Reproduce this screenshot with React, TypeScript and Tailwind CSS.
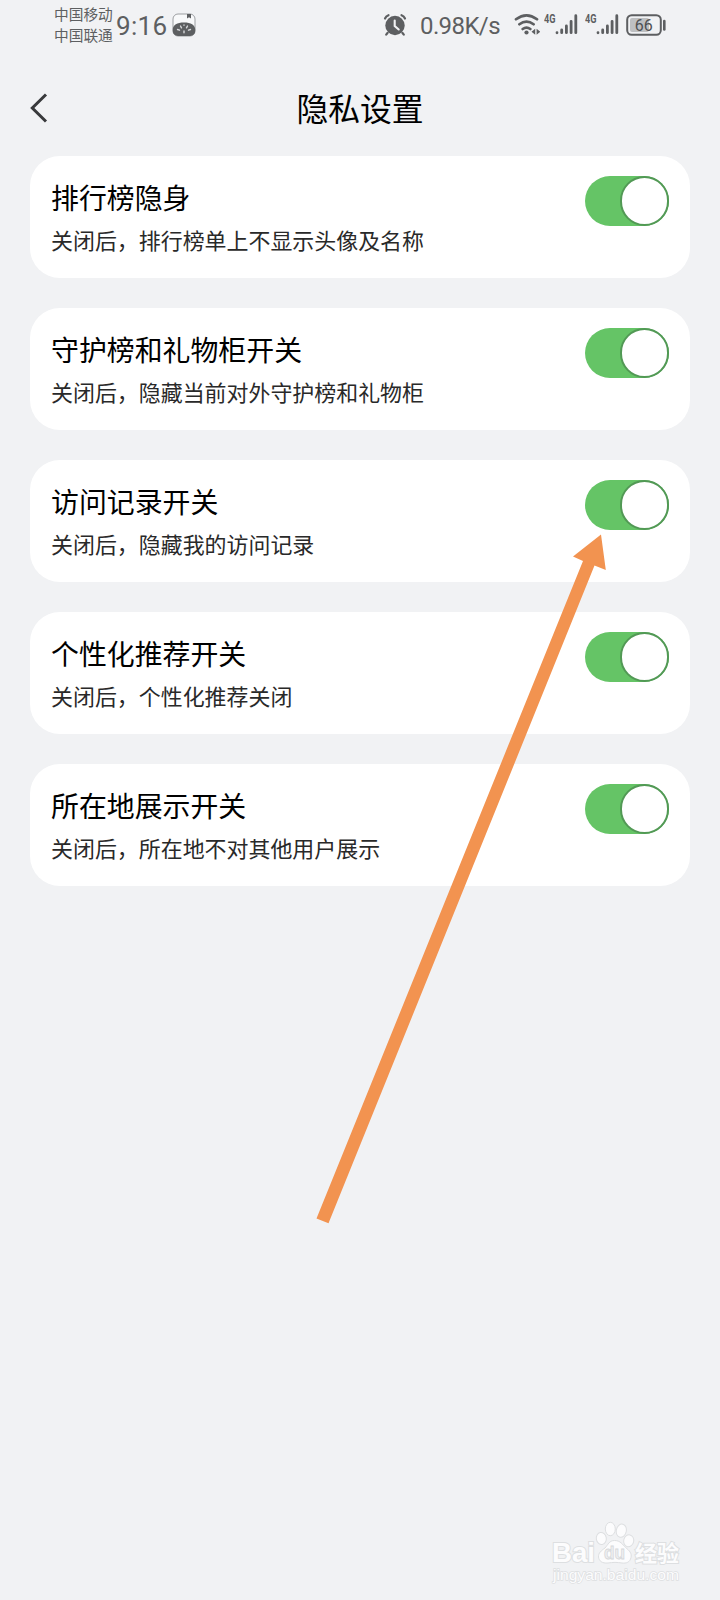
import { useState } from 'react'

interface Setting {
  id: string
  title: string
  description: string
}

const settings: Setting[] = [
  { id: 'ranking', title: '排行榜隐身', description: '关闭后，排行榜单上不显示头像及名称' },
  { id: 'guard', title: '守护榜和礼物柜开关', description: '关闭后，隐藏当前对外守护榜和礼物柜' },
  { id: 'visits', title: '访问记录开关', description: '关闭后，隐藏我的访问记录' },
  { id: 'recommend', title: '个性化推荐开关', description: '关闭后，个性化推荐关闭' },
  { id: 'location', title: '所在地展示开关', description: '关闭后，所在地不对其他用户展示' },
]

function Signal() {
  return (
    <svg className="-mt-[4px]" width="36" height="28" viewBox="0 -4 36 28" fill="none" stroke="#5d5f61" strokeWidth="2.8" strokeLinecap="round">
      <text x="0" y="9.7" fontSize="13" fontWeight="700" textLength="11.5" lengthAdjust="spacingAndGlyphs" fill="#5d5f61" stroke="none" fontFamily="Roboto, sans-serif">4G</text>
      <path d="M13 19.7v.1M17.7 17v2.7M22.4 13v6.7M27.1 8.3v11.4M31.8 2.7v17" />
    </svg>
  )
}

function StatusBar() {
  return (
    <div className="flex h-[50px] items-center pl-[54px] pr-[53px] text-[#5d5f61]">
      <div className="-mt-[3px] w-[60px] whitespace-nowrap text-[14.7px] leading-[21px]">
        <div>中国移动</div>
        <div>中国联通</div>
      </div>
      <div className="ml-[2px] mt-[2px] w-[56px] font-[Roboto] text-[26px] leading-[30px] tracking-[0.3px]">9:16</div>
      <svg className="-mt-px" width="24" height="24" viewBox="0 0 24 24">
        <rect x="1" y="1" width="22" height="22" rx="5" fill="#f8f9fa" stroke="#929497" strokeWidth=".9" />
        <path d="M15 1h4v4.5l-2-1.2-2 1.2z" fill="#5d5f61" />
        <path d="M.8 16C1 12 5 9.4 12 9.4S23 12 23.2 16v2a5 5 0 0 1-5 5H5.8a5 5 0 0 1-5-5z" fill="#5d5f61" />
        <path d="M5.5 16.5l2 .7M8.5 13l1 1.8M12 18v1.8M15.5 13l-1 1.8M18.5 16.5l-2 .7M12 12v.2" stroke="#d8d9db" strokeWidth="1.4" strokeLinecap="round" />
      </svg>
      <svg className="-mt-px ml-auto" width="24" height="24" viewBox="0 0 24 24" fill="none" stroke="#5d5f61" strokeLinecap="round">
        <circle cx="12" cy="12.5" r="9.7" fill="#5d5f61" stroke="none" />
        <path d="M2 5.5Q3 3.2 5.5 2.2M22 5.5Q21 3.2 18.5 2.2M4.5 20l-1.3 1.7M19.5 20l1.3 1.7" strokeWidth="2.2" />
        <path d="M11.7 7.5v5.5l4 3.5" stroke="#f1f2f4" strokeWidth="2.1" />
      </svg>
      <div className="ml-[13px] mt-[2px] w-[94px] whitespace-nowrap font-[Roboto] text-[24px] leading-[30px] tracking-[-0.6px]">0.98K/s</div>
      <svg width="26" height="24" viewBox="0 0 26 24" fill="none" stroke="#5d5f61" strokeWidth="2.7" strokeLinecap="round">
        <path d="M2 6.3q10.5-8 21 0M5.4 11.3q7.1-5.4 14.2 0M8.7 16q3.8-2.8 7.6 0" />
        <circle cx="12.5" cy="19.5" r="2.1" fill="#5d5f61" stroke="none" />
        <path d="M21.2 15.8v6l-3.7-3zM22.6 15.8v6l3.700-3z" fill="#5d5f61" stroke="none" />
      </svg>
      <div className="ml-[4px] flex gap-[5px]">
        <Signal />
        <Signal />
      </div>
      <svg className="-mt-px ml-[4px]" width="42" height="24" viewBox="0 0 42 24">
        <rect x="2.2" y="2.2" width="33.6" height="19.6" rx="4.5" fill="none" stroke="#5d5f61" strokeWidth="2" />
        <rect x="5" y="5" width="19" height="14" rx="2" fill="#bec0c2" />
        <path d="M39.3 8v8.5" stroke="#5d5f61" strokeWidth="2.6" strokeLinecap="round" />
        <text x="18.8" y="17.7" fontSize="16" textAnchor="middle" fill="#4f5153" fontFamily="Roboto, sans-serif">66</text>
      </svg>
    </div>
  )
}

function Toggle({ on, onClick }: { on: boolean; onClick: () => void }) {
  return (
    <button
      role="switch"
      aria-checked={on}
      onClick={onClick}
      className={`flex h-[50px] w-[84px] shrink-0 rounded-full ${on ? 'justify-end bg-[#65c466]' : 'justify-start bg-gray-300'}`}
    >
      <span className="h-[50px] w-[49px] rounded-full border-2 border-[#529955] bg-white" />
    </button>
  )
}

function Watermark() {
  return (
    <svg className="absolute left-[548px] top-[1516px]" width="140" height="72" viewBox="0 0 140 72" fill="#fcfcfd" stroke="#dddfe1" strokeWidth="1">
      <g fontFamily="Liberation Sans, sans-serif" fontWeight="700" paintOrder="stroke" strokeWidth="2">
        <text x="4" y="45.5" fontSize="28" textLength="43" lengthAdjust="spacingAndGlyphs">Bai</text>
        <text x="87" y="45" fontSize="22" textLength="44" lengthAdjust="spacingAndGlyphs" fontFamily="Noto Sans CJK SC, sans-serif">经验</text>
      </g>
      <ellipse cx="53.3" cy="22.5" rx="5" ry="6" transform="rotate(-10 53.3 22.5)" />
      <ellipse cx="62.3" cy="13" rx="5" ry="6.7" />
      <ellipse cx="73.3" cy="14.7" rx="5" ry="6.7" transform="rotate(12 73.3 14.7)" />
      <ellipse cx="80.7" cy="24.8" rx="5" ry="6" transform="rotate(12 80.7 24.8)" />
      <path d="M66.5 24.5c6 0 8 4 11 7 4 3 6.5 6 5.5 10-1 5-5 6-9 5.5-5-.8-9-.8-14 0-6 .5-9-2-9.5-6-.4-4 3-6.5 6.5-9 3-3 4-7.5 9.5-7.5z" />
      <text x="56" y="43" fontSize="19" fontWeight="700" textLength="21" lengthAdjust="spacingAndGlyphs" fill="#eeeff1" stroke="#d6d8da" strokeWidth=".8" fontFamily="Liberation Sans, sans-serif">du</text>
      <text x="5" y="63.5" fontSize="14" textLength="126" lengthAdjust="spacingAndGlyphs" paintOrder="stroke" strokeWidth="1.3" fontFamily="Liberation Sans, sans-serif">jingyan.baidu.com</text>
    </svg>
  )
}

export default function App() {
  const [disabled, setDisabled] = useState<string[]>([])

  const toggle = (id: string) => {
    setDisabled(disabled.includes(id) ? disabled.filter((d) => d !== id) : [...disabled, id])
  }

  return (
    <div className="relative h-[1600px] w-[720px] overflow-hidden bg-[#f1f2f4] font-['Noto_Sans_CJK_SC',sans-serif]">
      <StatusBar />

      {/* Header */}
      <header className="grid h-[106px] grid-cols-[60px_1fr_60px] items-center pb-px">
        <button className="flex pl-[29px] pt-[11px]">
          <svg width="20" height="32" viewBox="0 0 20 32" fill="none" stroke="#38393b" strokeWidth="3">
            <path d="M17 2.5L3.3 16 17 29.5" />
          </svg>
        </button>
        <h1 className="pt-[9px] text-center text-[31.8px] leading-[40px] text-black">隐私设置</h1>
      </header>

      {/* Settings */}
      <main className="flex flex-col gap-[30px] px-[30px]">
        {settings.map((s) => (
          <section key={s.id} className="flex h-[122px] items-start justify-between rounded-[30px] bg-white px-[21px] pt-5">
            <div>
              <h2 className="text-[27.9px] leading-[42px] text-black">{s.title}</h2>
              <p className="mt-[5px] text-[21.95px] leading-[34px] text-[#292929]">{s.description}</p>
            </div>
            <Toggle on={!disabled.includes(s.id)} onClick={() => toggle(s.id)} />
          </section>
        ))}
      </main>

      {/* Pointer to the visit history switch */}
      <svg className="pointer-events-none absolute left-0 top-0" width="720" height="1600" viewBox="0 0 720 1600">
        <path d="M601 534.5L605.8 570 594.5 565.6 328.5 1223.3 316.5 1218.5 583 561 573 556.5z" fill="#f29350" />
      </svg>

      <Watermark />
    </div>
  )
}
